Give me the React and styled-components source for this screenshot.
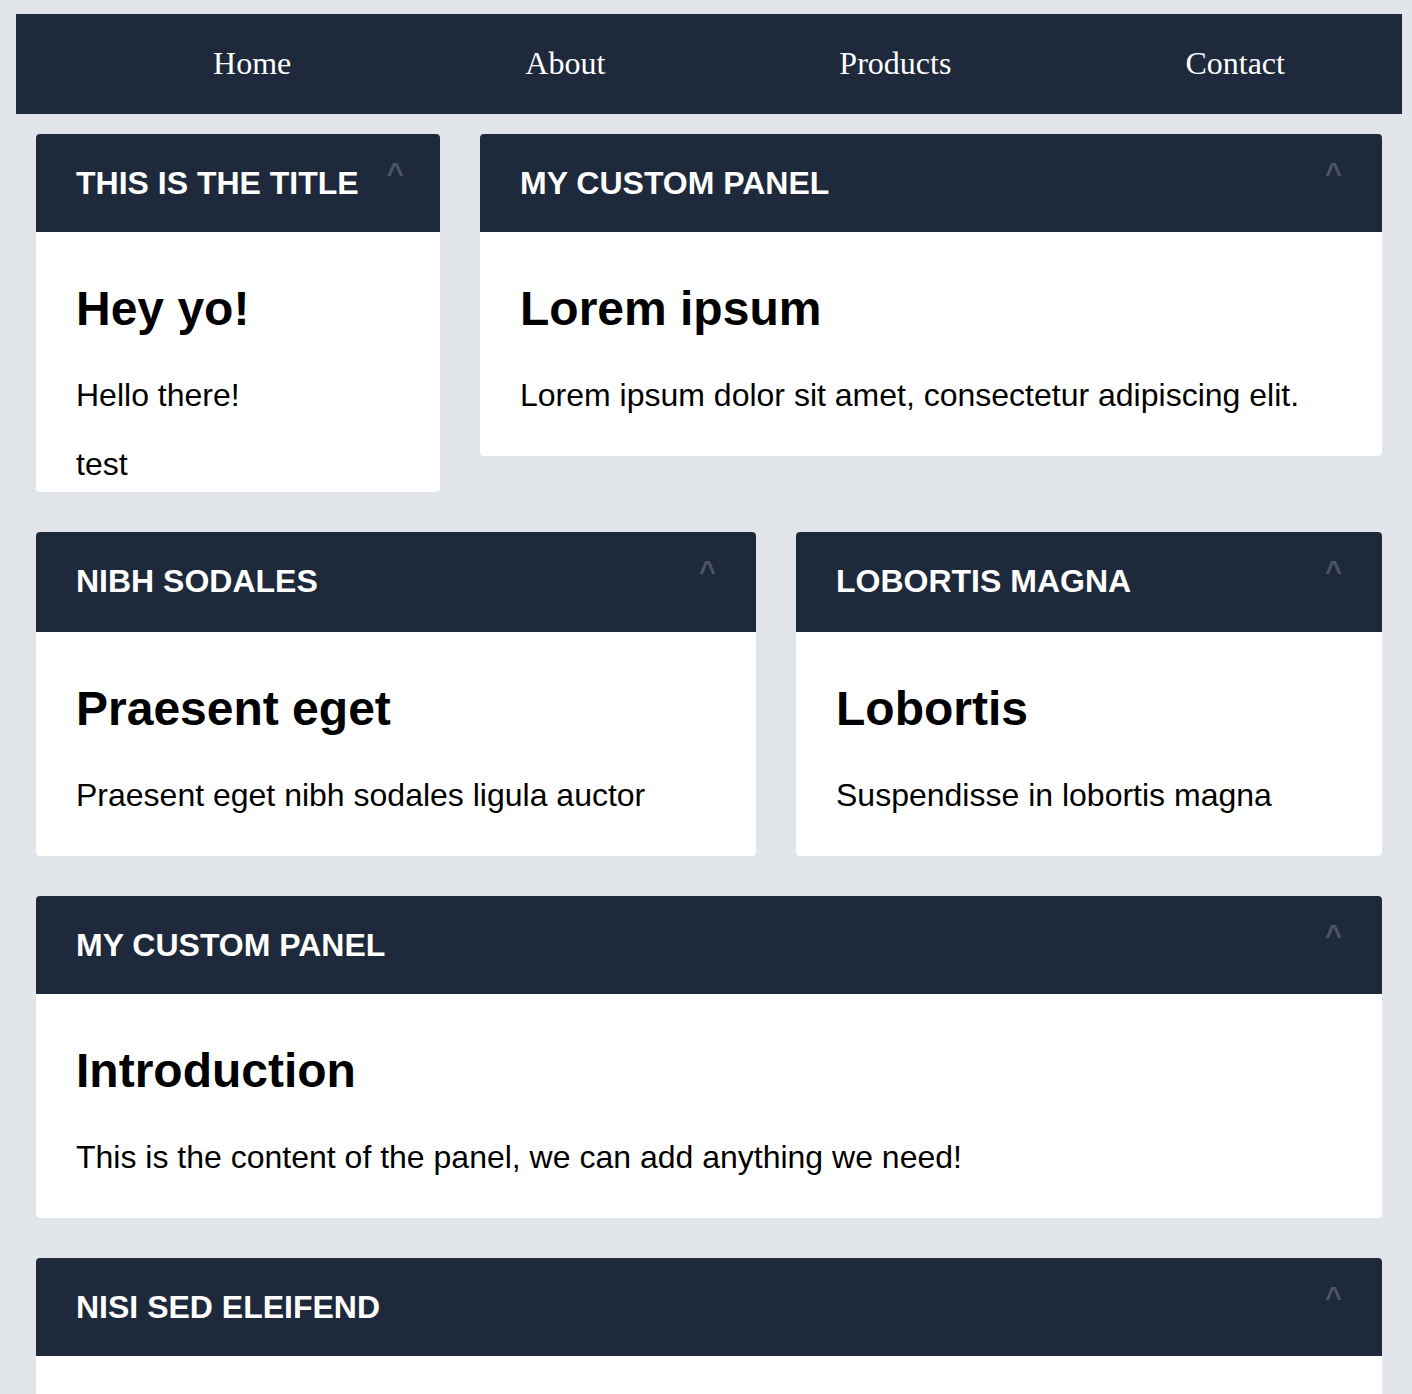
import React from "react";
import styled, { createGlobalStyle } from "styled-components";

const navy = "#1e293b";

const GlobalStyle = createGlobalStyle`
  body {
    margin: 0;
    background: #e2e6ea;
    font-family: "Liberation Sans", Arial, sans-serif;
  }
`;

const Page = styled.div`
  padding: 14px 10px 40px 16px;
`;

const NavBar = styled.nav`
  background: ${navy};
  height: 100px;
  padding-left: 80px;
  display: flex;
  align-items: center;
  justify-content: space-around;
`;

const NavLink = styled.a`
  font-family: "Liberation Serif", "Times New Roman", serif;
  font-size: 32px;
  color: #fff;
  text-decoration: none;
  margin-top: -2px;
`;

const Main = styled.main`
  padding: 20px;
  display: flex;
  flex-direction: column;
  gap: 40px;
`;

const Row = styled.div`
  display: grid;
  grid-template-columns: ${(p) => p.$columns || "1fr"};
  gap: 40px;
  align-items: start;
`;

const PanelBox = styled.section`
  background: #fff;
  border-radius: 4px;
  overflow: hidden;
`;

// headers are 98px; a taller one keeps its title where the others have it
const PanelHeader = styled.header`
  box-sizing: border-box;
  height: ${(p) => p.$height}px;
  padding: 0 40px ${(p) => p.$height - 98}px;
  background: ${navy};
  display: flex;
  align-items: center;
  justify-content: space-between;
  gap: 28px;
`;

const PanelTitle = styled.h3`
  margin: 0;
  font-size: 32px;
  font-weight: 700;
  color: #fff;
  white-space: nowrap;
`;

const Toggle = styled.button`
  align-self: flex-start;
  margin-top: 25px;
  padding: 0;
  border: 0;
  background: none;
  font-family: "Liberation Sans", Arial, sans-serif;
  font-size: 29px;
  font-weight: 700;
  line-height: 1;
  color: #4b5563;
  cursor: pointer;
`;

const PanelBody = styled.div`
  box-sizing: border-box;
  max-height: 260px;
  overflow: hidden;
  padding: 9px 40px 10px;
  color: #000;
`;

const Heading = styled.h2`
  font-size: 48px;
  font-weight: 700;
  margin: 40px 0 41px;
`;

const Text = styled.p`
  font-size: 32px;
  margin: 32px 0;
`;

const Panel = ({ title, headerHeight = 98, children }) => (
  <PanelBox>
    <PanelHeader $height={headerHeight}>
      <PanelTitle>{title}</PanelTitle>
      <Toggle aria-label="Collapse">^</Toggle>
    </PanelHeader>
    <PanelBody>{children}</PanelBody>
  </PanelBox>
);

const App = () => {
  return (
    <>
      <GlobalStyle />
      <Page>
        <NavBar>
          <NavLink href="#">Home</NavLink>
          <NavLink href="#">About</NavLink>
          <NavLink href="#">Products</NavLink>
          <NavLink href="#">Contact</NavLink>
        </NavBar>

        <Main>
          <Row $columns="404px 1fr">
            <Panel title="THIS IS THE TITLE">
              <Heading>Hey yo!</Heading>
              <Text>Hello there!</Text>
              <Text>test</Text>
            </Panel>
            <Panel title="MY CUSTOM PANEL">
              <Heading>Lorem ipsum</Heading>
              <Text>Lorem ipsum dolor sit amet, consectetur adipiscing elit.</Text>
            </Panel>
          </Row>

          <Row $columns="720px 1fr">
            <Panel title="NIBH SODALES" headerHeight={100}>
              <Heading>Praesent eget</Heading>
              <Text>Praesent eget nibh sodales ligula auctor</Text>
            </Panel>
            <Panel title="LOBORTIS MAGNA" headerHeight={100}>
              <Heading>Lobortis</Heading>
              <Text>Suspendisse in lobortis magna</Text>
            </Panel>
          </Row>

          <Row>
            <Panel title="MY CUSTOM PANEL">
              <Heading>Introduction</Heading>
              <Text>This is the content of the panel, we can add anything we need!</Text>
            </Panel>
          </Row>

          <Row>
            <Panel title="NISI SED ELEIFEND">
              <Heading>Nisi sed</Heading>
              <Text>Nisi sed eleifend tincidunt, nulla arcu fermentum lorem.</Text>
            </Panel>
          </Row>
        </Main>
      </Page>
    </>
  );
};

export default App;
